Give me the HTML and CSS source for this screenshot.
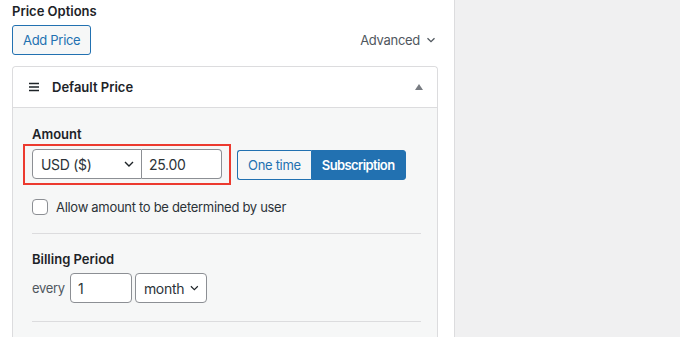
FILE: index.html
```html
<!DOCTYPE html>
<html lang="en">
<head>
<meta charset="utf-8">
<title>Price Options</title>
<link rel="stylesheet" href="styles.css">
</head>
<body>
<div class="layout">
  <main class="main">
    <h2 class="heading">Price Options</h2>
    <div class="toolbar">
      <button class="btn-secondary" type="button">Add Price</button>
      <button class="advanced" type="button">Advanced
        <svg class="chev" width="10" height="10" viewBox="0 0 10 10" aria-hidden="true"><path d="M1.5 3.2 L5 6.7 L8.5 3.2" fill="none" stroke="#50575e" stroke-width="1.3"/></svg>
      </button>
    </div>

    <section class="panel">
      <header class="panel-head">
        <svg class="handle" width="10" height="10" viewBox="0 0 10 10" aria-hidden="true"><path d="M0 1.5h10M0 5h10M0 8.5h10" stroke="#1d2327" stroke-width="1.4"/></svg>
        <span class="panel-title">Default Price</span>
        <svg class="toggle" width="8" height="6" viewBox="0 0 8 6" aria-hidden="true"><path d="M0 6 L4 0 L8 6 Z" fill="#787c82"/></svg>
      </header>
      <div class="panel-body">
        <div class="group">
          <div class="label">Amount</div>
          <div class="amount-row">
            <div class="highlight">
              <div class="select currency"><span>USD ($)</span>
                <svg width="10" height="10" viewBox="0 0 10 10" aria-hidden="true"><path d="M1 3 L5 7 L9 3" fill="none" stroke="#1d2327" stroke-width="1.4"/></svg>
              </div>
              <div class="input amount">25.00</div>
            </div>
            <div class="seg">
              <button class="seg-btn" type="button">One time</button>
              <button class="seg-btn active" type="button">Subscription</button>
            </div>
          </div>
          <label class="check-row"><span class="checkbox"></span>Allow amount to be determined by user</label>
        </div>
        <div class="group">
          <div class="label">Billing Period</div>
          <div class="period-row">
            <span class="muted">every</span>
            <div class="input period">1</div>
            <div class="select month"><span>month</span>
              <svg width="10" height="10" viewBox="0 0 10 10" aria-hidden="true"><path d="M1 3 L5 7 L9 3" fill="none" stroke="#1d2327" stroke-width="1.3"/></svg>
            </div>
          </div>
        </div>
      </div>
    </section>
  </main>
  <aside class="side"></aside>
</div>
</body>
</html>
```
FILE: styles.css
```css
* { box-sizing: border-box; }
html, body { margin: 0; height: 100%; }
body {
  font-family: Inter, "Noto Sans", "Liberation Sans", sans-serif;
  font-size: 13px;
  letter-spacing: -0.3px;
  color: #1d2327;
  background: #f0f0f1;
  overflow: hidden;
}
.layout { display: flex; height: 337px; }
.main {
  width: 455px;
  flex: none;
  background: #fff;
  border-right: 1px solid #dcdcde;
  padding: 2px 16px 0 12px;
}
.side { flex: 1; background: #f0f0f1; }
.heading {
  margin: 0;
  font-size: 13px;
  line-height: 18px;
  font-weight: 600;
  letter-spacing: 0;
}
.toolbar {
  margin-top: 5px;
  display: flex;
  align-items: center;
  justify-content: space-between;
}
.btn-secondary {
  font: inherit;
  letter-spacing: inherit;
  height: 30px;
  padding: 0 10px;
  color: #2271b1;
  background: #f6f7f7;
  border: 1px solid #2271b1;
  border-radius: 3px;
}
.advanced {
  font: inherit;
  letter-spacing: inherit;
  color: #50575e;
  background: none;
  border: 0;
  padding: 0 2px 0 0;
  display: flex;
  align-items: center;
  gap: 6px;
}
.panel {
  margin-top: 11px;
  border: 1px solid #dcdcde;
  border-radius: 4px 4px 0 0;
  border-bottom: 0;
  height: 280px;
}
.panel-head {
  height: 41px;
  display: flex;
  align-items: center;
  padding: 0 14px 0 16px;
  border-bottom: 1px solid #dcdcde;
  background: #fff;
  border-radius: 4px 4px 0 0;
}
.handle { margin-right: 13px; }
.panel-title { font-weight: 600; flex: 1; letter-spacing: 0; }
.panel-body {
  background: #f6f7f7;
  padding: 0 16px 0 19px;
  height: 240px;
}
.group {
  padding: 17px 0 18px;
  border-bottom: 1px solid #dcdcde;
}
.group + .group { padding-top: 16px; }
.label {
  font-weight: 600;
  line-height: 18px;
  letter-spacing: 0;
}
.amount-row {
  margin-top: 1px;
  display: flex;
  align-items: center;
  gap: 6px;
}
.highlight {
  margin-left: -9px;
  display: flex;
  padding: 3px 7px 4px;
  border: 2px solid #ec3a2f;
}
.select, .input {
  height: 30px;
  display: flex;
  align-items: center;
  background: #fff;
  border: 1px solid #8c8f94;
  border-radius: 4px;
  font-size: 14px;
  color: #2c3338;
  white-space: nowrap;
}
.select { justify-content: space-between; padding: 0 8px; }
.currency { width: 110px; border-radius: 4px 0 0 4px; padding-right: 7px; }
.amount { width: 80px; padding: 0 7px; border-left: 0; border-radius: 0 4px 4px 0; }
.seg { display: flex; }
.seg-btn {
  font: inherit;
  letter-spacing: inherit;
  font-size: 13px;
  height: 30px;
  padding: 0 10px;
  border: 1px solid #2271b1;
  background: #f6f7f7;
  color: #2271b1;
  white-space: nowrap;
}
.seg-btn:first-child { border-radius: 3px 0 0 3px; border-right: 0; }
.seg-btn.active {
  background: #2271b1;
  color: #fff;
  font-weight: 600;
  letter-spacing: -0.6px;
  border-radius: 0 3px 3px 0;
}
.check-row {
  margin-top: 14px;
  display: flex;
  align-items: center;
  gap: 8px;
  line-height: 16px;
  color: #2c3338;
}
.checkbox {
  width: 16px;
  height: 16px;
  background: #fff;
  border: 1px solid #8c8f94;
  border-radius: 4px;
}
.period-row {
  margin-top: 5px;
  display: flex;
  align-items: center;
}
.muted { color: #50575e; margin-right: 5px; }
.period { width: 62px; padding: 0 7px; margin-right: 3px; }
.month { width: 72px; padding: 0 7px 0 8px; }
.month svg { margin-left: 6px; }
```
